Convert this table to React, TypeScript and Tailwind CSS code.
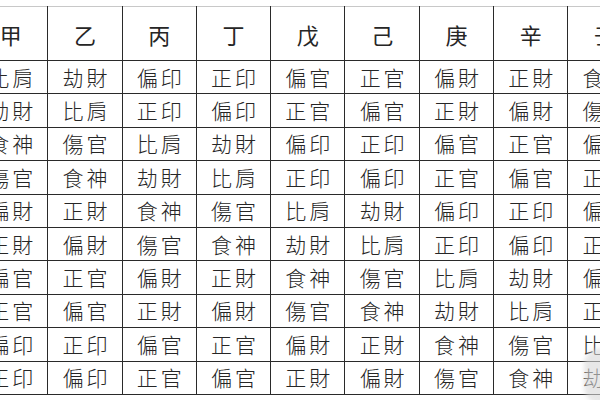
const stems = ["甲", "乙", "丙", "丁", "戊", "己", "庚", "辛", "壬"];

const rows: string[][] = [
  ["比肩", "劫財", "偏印", "正印", "偏官", "正官", "偏財", "正財", "食神"],
  ["劫財", "比肩", "正印", "偏印", "正官", "偏官", "正財", "偏財", "傷官"],
  ["食神", "傷官", "比肩", "劫財", "偏印", "正印", "偏官", "正官", "偏財"],
  ["傷官", "食神", "劫財", "比肩", "正印", "偏印", "正官", "偏官", "正財"],
  ["偏財", "正財", "食神", "傷官", "比肩", "劫財", "偏印", "正印", "偏官"],
  ["正財", "偏財", "傷官", "食神", "劫財", "比肩", "正印", "偏印", "正官"],
  ["偏官", "正官", "偏財", "正財", "食神", "傷官", "比肩", "劫財", "偏印"],
  ["正官", "偏官", "正財", "偏財", "傷官", "食神", "劫財", "比肩", "正印"],
  ["偏印", "正印", "偏官", "正官", "偏財", "正財", "食神", "傷官", "比肩"],
  ["正印", "偏印", "正官", "偏官", "正財", "偏財", "傷官", "食神", "劫財"],
];

export default function App() {
  return (
    <div className="relative h-[400px] w-[600px] overflow-hidden bg-white">
      <table
        className="ml-[-27px] mt-[6px] w-[669px] min-w-[669px] table-fixed border-collapse text-[#262626]"
        style={{ fontFamily: '"Noto Sans CJK TC", "Noto Sans CJK SC", sans-serif' }}
      >
        <colgroup>
          {stems.map((s) => (
            <col key={s} className="w-[74.3px]" />
          ))}
        </colgroup>
        <thead>
          <tr className="h-[54px]">
            {stems.map((s) => (
              <th
                key={s}
                className="border border-t-[#c8c8c8] border-[#2a2a2a] p-0 text-center align-middle text-[22px] font-normal leading-none"
              >
                {s}
              </th>
            ))}
          </tr>
        </thead>
        <tbody>
          {rows.map((row, i) => (
            <tr key={i} className="h-[33.4px]">
              {row.map((cell, j) => (
                <td
                  key={j}
                  className="border border-[#2a2a2a] p-0 text-center align-middle text-[21px] font-light leading-none tracking-[3px]"
                >
                  <span className="pl-[3px]">{cell}</span>
                </td>
              ))}
            </tr>
          ))}
        </tbody>
      </table>
      {/* faint watermark in the corner */}
      <div className="absolute left-[584px] top-[348px] h-[56px] w-[34px] rounded-full bg-[#d8d8d8] opacity-60 blur-[2px]" />
    </div>
  );
}
